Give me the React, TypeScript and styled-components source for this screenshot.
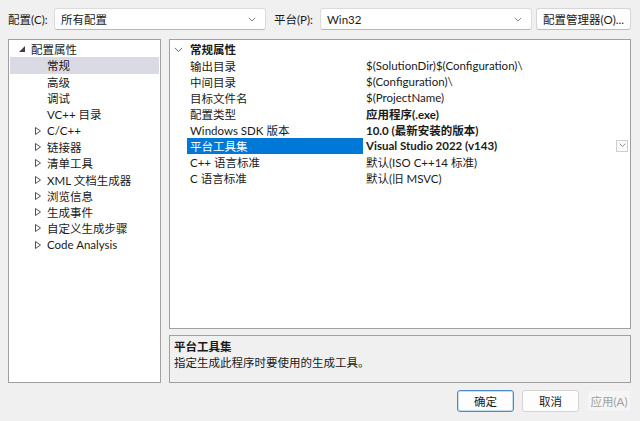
import React from "react";
import styled, { createGlobalStyle } from "styled-components";

const GlobalStyle = createGlobalStyle`
  html, body {
    margin: 0;
    padding: 0;
    background: #f0f0f0;
  }
  body {
    font-family: Lato, "Noto Sans CJK SC", sans-serif;
    font-size: 11.5px;
    color: #1a1a1a;
  }
`;

interface TreeItem {
  label: string;
  level: 0 | 1;
  kind: "open" | "closed" | "leaf";
  selected?: boolean;
}

const treeItems: TreeItem[] = [
  { label: "配置属性", level: 0, kind: "open" },
  { label: "常规", level: 1, kind: "leaf", selected: true },
  { label: "高级", level: 1, kind: "leaf" },
  { label: "调试", level: 1, kind: "leaf" },
  { label: "VC++ 目录", level: 1, kind: "leaf" },
  { label: "C/C++", level: 1, kind: "closed" },
  { label: "链接器", level: 1, kind: "closed" },
  { label: "清单工具", level: 1, kind: "closed" },
  { label: "XML 文档生成器", level: 1, kind: "closed" },
  { label: "浏览信息", level: 1, kind: "closed" },
  { label: "生成事件", level: 1, kind: "closed" },
  { label: "自定义生成步骤", level: 1, kind: "closed" },
  { label: "Code Analysis", level: 1, kind: "closed" },
];

interface Prop {
  name: string;
  value: string;
  bold?: boolean;
  selected?: boolean;
}

const props: Prop[] = [
  { name: "输出目录", value: "$(SolutionDir)$(Configuration)\\" },
  { name: "中间目录", value: "$(Configuration)\\" },
  { name: "目标文件名", value: "$(ProjectName)" },
  { name: "配置类型", value: "应用程序(.exe)", bold: true },
  { name: "Windows SDK 版本", value: "10.0 (最新安装的版本)", bold: true },
  { name: "平台工具集", value: "Visual Studio 2022 (v143)", bold: true, selected: true },
  { name: "C++ 语言标准", value: "默认(ISO C++14 标准)" },
  { name: "C 语言标准", value: "默认(旧 MSVC)" },
];

const Chevron = ({ size = 8 }: { size?: number }) => (
  <svg width={size} height={size * 0.6} viewBox="0 0 10 6">
    <path d="M1 1 L5 5 L9 1" fill="none" stroke="#606060" strokeWidth="1" />
  </svg>
);

export default function App() {
  return (
    <Window>
      <GlobalStyle />
      <TopBar>
        <Label>配置(C):</Label>
        <Combo $width={212}>
          <span>所有配置</span>
          <Chevron />
        </Combo>
        <Label $ml={8}>平台(P):</Label>
        <Combo $width={212}>
          <span>Win32</span>
          <Chevron />
        </Combo>
        <ManagerButton>配置管理器(O)...</ManagerButton>
      </TopBar>
      <Main>
        <Tree>
          {treeItems.map((t) => (
            <TreeRow key={t.label} $selected={t.selected}>
              <Expander $level={t.level}>
                {t.kind === "open" && (
                  <svg width="6" height="6" viewBox="0 0 6 6">
                    <path d="M6 0 L6 6 L0 6 Z" fill="#404040" />
                  </svg>
                )}
                {t.kind === "closed" && (
                  <svg width="6" height="8" viewBox="0 0 6 8">
                    <path d="M0.5 0.5 L5.5 4 L0.5 7.5 Z" fill="none" stroke="#505050" strokeWidth="1" />
                  </svg>
                )}
              </Expander>
              <span>{t.label}</span>
            </TreeRow>
          ))}
        </Tree>
        <RightCol>
          <Grid>
            <GroupRow>
              <Gutter>
                <Chevron size={9} />
              </Gutter>
              <GroupTitle>常规属性</GroupTitle>
            </GroupRow>
            {props.map((p) => (
              <PropRow key={p.name}>
                <Gutter />
                <NameCell $selected={p.selected}>{p.name}</NameCell>
                <ValueCell $bold={p.bold}>
                  <span>{p.value}</span>
                  {p.selected && (
                    <DropBtn>
                      <Chevron size={7} />
                    </DropBtn>
                  )}
                </ValueCell>
              </PropRow>
            ))}
          </Grid>
          <Description>
            <DescTitle>平台工具集</DescTitle>
            <div>指定生成此程序时要使用的生成工具。</div>
          </Description>
        </RightCol>
      </Main>
      <Footer>
        <Button $default>确定</Button>
        <Button>取消</Button>
        <Button $disabled $width={44}>应用(A)</Button>
      </Footer>
    </Window>
  );
}

const Window = styled.div`
  width: 640px;
  height: 421px;
  box-sizing: border-box;
  padding: 8px 9px 0 8px;
  display: flex;
  flex-direction: column;
`;

const TopBar = styled.div`
  display: flex;
  align-items: center;
  height: 22px;
`;

const Label = styled.span<{ $ml?: number }>`
  margin-left: ${(p) => p.$ml || 0}px;
  width: 46px;
  flex: none;
`;

const Combo = styled.div<{ $width: number }>`
  width: ${(p) => p.$width}px;
  height: 22px;
  box-sizing: border-box;
  background: #fff;
  border: 1px solid #dcdcdc;
  border-bottom-color: #b8b8b8;
  border-radius: 3px;
  display: flex;
  align-items: center;
  justify-content: space-between;
  padding: 0 9px 0 6px;
`;

const ManagerButton = styled.div`
  margin-left: auto;
  height: 22px;
  box-sizing: border-box;
  padding: 0 6px;
  background: #fdfdfd;
  border: 1px solid #d6d6d6;
  border-bottom-color: #bcbcbc;
  border-radius: 3px;
  display: flex;
  align-items: center;
`;

const Main = styled.div`
  margin-top: 9px;
  display: flex;
  gap: 8px;
  height: 344px;
`;

const Tree = styled.div`
  width: 153px;
  flex: none;
  box-sizing: border-box;
  background: #fff;
  border: 1px solid #a0a0a0;
  padding: 1px 1px;
`;

const TreeRow = styled.div<{ $selected?: boolean }>`
  height: 16.3px;
  display: flex;
  align-items: center;
  background: ${(p) => (p.$selected ? "#dadae4" : "transparent")};
  white-space: nowrap;
`;

const Expander = styled.span<{ $level: number }>`
  width: 12px;
  display: flex;
  justify-content: center;
  margin-left: ${(p) => (p.$level === 0 ? 6 : 22)}px;
  margin-right: 3px;
`;

const RightCol = styled.div`
  flex: 1;
  display: flex;
  flex-direction: column;
  gap: 6px;
`;

const Grid = styled.div`
  height: 290px;
  box-sizing: border-box;
  background: #fff;
  border: 1px solid #a0a0a0;
  padding-top: 1px;
`;

const GroupRow = styled.div`
  height: 16.5px;
  display: flex;
  align-items: center;
`;

const Gutter = styled.div`
  width: 17px;
  flex: none;
  display: flex;
  justify-content: center;
  align-items: center;
`;

const GroupTitle = styled.div`
  font-weight: bold;
  padding-left: 3px;
`;

const PropRow = styled.div`
  height: 16px;
  display: flex;
  align-items: stretch;
`;

const NameCell = styled.div<{ $selected?: boolean }>`
  width: 176px;
  flex: none;
  box-sizing: border-box;
  padding-left: 3px;
  display: flex;
  align-items: center;
  white-space: nowrap;
  background: ${(p) => (p.$selected ? "#0078d7" : "transparent")};
  color: ${(p) => (p.$selected ? "#fff" : "inherit")};
`;

const ValueCell = styled.div<{ $bold?: boolean }>`
  flex: 1;
  display: flex;
  align-items: center;
  justify-content: space-between;
  padding-left: 3px;
  padding-right: 2px;
  font-weight: ${(p) => (p.$bold ? "bold" : "normal")};
  white-space: nowrap;
`;

const DropBtn = styled.div`
  width: 12px;
  height: 12px;
  box-sizing: border-box;
  border: 1px solid #cfcfcf;
  display: flex;
  align-items: center;
  justify-content: center;
  background: #fafafa;
`;

const Description = styled.div`
  flex: 1;
  box-sizing: border-box;
  background: #f0f0f0;
  border: 1px solid #a0a0a0;
  padding: 3px 4px;
  line-height: 16px;
`;

const DescTitle = styled.div`
  font-weight: bold;
`;

const Footer = styled.div`
  margin-top: 7px;
  display: flex;
  justify-content: flex-end;
  gap: 8px;
`;

const Button = styled.div<{ $default?: boolean; $disabled?: boolean; $width?: number }>`
  width: ${(p) => p.$width || 57}px;
  height: 22px;
  box-sizing: border-box;
  display: flex;
  align-items: center;
  justify-content: center;
  border-radius: 3px;
  background: ${(p) => (p.$disabled ? "#f5f5f5" : "#fdfdfd")};
  color: ${(p) => (p.$disabled ? "#a0a0a0" : "inherit")};
  border: 1px solid
    ${(p) => (p.$default ? "#4a8bc9" : p.$disabled ? "#f0f0f0" : "#d4d4d4")};
  box-shadow: ${(p) => (p.$default ? "inset 0 0 0 1px #c4dcf0" : "none")};
`;
